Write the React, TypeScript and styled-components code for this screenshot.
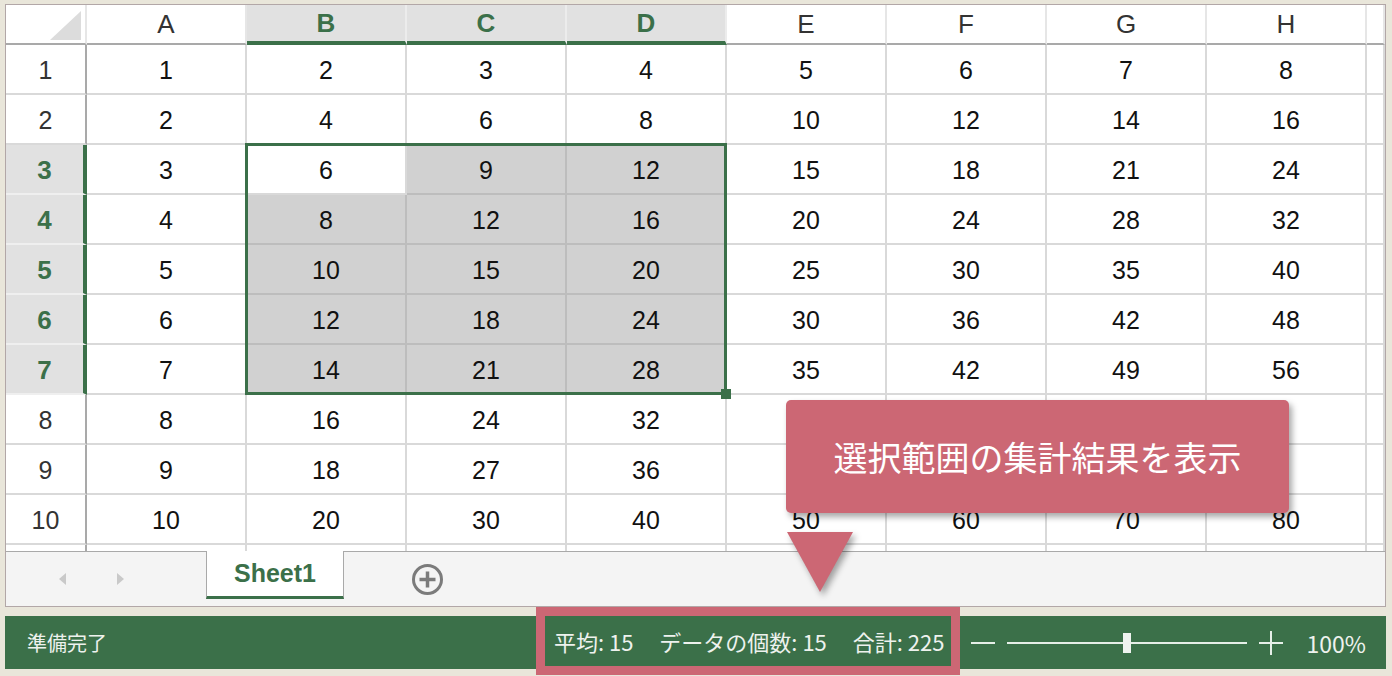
import styled, { createGlobalStyle } from "styled-components";

const GREEN = "#3b7049";
const PINK = "#cc6774";

const GlobalStyle = createGlobalStyle`
  html, body {
    margin: 0;
    padding: 0;
  }
  body {
    background: #e9e6da;
    font-family: "Liberation Sans", Arial, sans-serif;
  }
`;

const Page = styled.div`
  position: relative;
  width: 1392px;
  height: 676px;
  padding: 4px 6px 0 5px;
  box-sizing: border-box;
  overflow: hidden;
`;

const Workbook = styled.div`
  height: 603px;
  box-sizing: border-box;
  border: 1px solid #b2a7a7;
  background: #fff;
  display: flex;
  flex-direction: column;
  overflow: hidden;
`;

const Grid = styled.div`
  display: grid;
  grid-template-columns: 81px repeat(8, 160px) 1fr;
  grid-template-rows: 40px repeat(11, 50px);
  height: 546px;
  flex-shrink: 0;
  overflow: hidden;
`;

// every grid part names its own track so the selection outline can share them
type Place = { $row: number; $col: number };

const placed = (p: Place) => `
  grid-row: ${p.$row};
  grid-column: ${p.$col};
`;

const Corner = styled.div`
  grid-row: 1;
  grid-column: 1;
  display: flex;
  align-items: flex-end;
  justify-content: flex-end;
  padding: 0 4px 3px 0;
  border-right: 2px solid #e6e6e6;
  border-bottom: 2px solid #a9a9a9;

  &::after {
    content: "";
    width: 31px;
    height: 29px;
    background: #dcdcdc;
    clip-path: polygon(100% 0, 100% 100%, 0 100%);
  }
`;

const ColHeader = styled.div<Place & { $selected?: boolean }>`
  ${placed}
  display: flex;
  align-items: center;
  justify-content: center;
  background: ${(p) => (p.$selected ? "#e1e1e1" : "#fff")};
  color: ${(p) => (p.$selected ? GREEN : "#333")};
  font-size: 26px;
  font-weight: ${(p) => (p.$selected ? 700 : 400)};
  border-right: 2px solid ${(p) => (p.$selected ? "#ececec" : "#e6e6e6")};
  border-bottom: ${(p) => (p.$selected ? `4px solid ${GREEN}` : "2px solid #a9a9a9")};
`;

const RowHeader = styled.div<Place & { $selected?: boolean }>`
  ${placed}
  display: flex;
  align-items: center;
  justify-content: center;
  padding-top: 2px;
  background: ${(p) => (p.$selected ? "#e1e1e1" : "#fff")};
  color: ${(p) => (p.$selected ? GREEN : "#333")};
  font-size: ${(p) => (p.$selected ? "26px" : "25px")};
  font-weight: ${(p) => (p.$selected ? 700 : 400)};
  border-right: ${(p) => (p.$selected ? `4px solid ${GREEN}` : "2px solid #a9a9a9")};
  border-bottom: 2px solid ${(p) => (p.$selected ? "#efefef" : "#d9d9d9")};
`;

const Cell = styled.div<Place & { $filled?: boolean }>`
  ${placed}
  display: flex;
  align-items: center;
  justify-content: center;
  padding-top: 2px;
  font-size: 25px;
  color: #111;
  background: ${(p) => (p.$filled ? "#d1d1d1" : "#fff")};
  border-right: 2px solid ${(p) => (p.$filled ? "#bdbdbd" : "#d9d9d9")};
  border-bottom: 2px solid ${(p) => (p.$filled ? "#bdbdbd" : "#d9d9d9")};
`;

// outline of the selected range B3:D7, laid over the cells
const Selection = styled.div`
  grid-column: 3 / 6;
  grid-row: 4 / 9;
  position: relative;
  margin: -2px 0 0 -2px;
  border: 3px solid ${GREEN};
  pointer-events: none;
`;

const FillHandle = styled.span`
  position: absolute;
  right: -7px;
  bottom: -7px;
  width: 10px;
  height: 10px;
  background: ${GREEN};
`;

const TabBar = styled.div`
  flex: 1;
  display: flex;
  align-items: flex-start;
  background: #f4f4f4;
  border-top: 1px solid #a9a9a9;
`;

const NavArrows = styled.div`
  width: 200px;
  height: 100%;
  box-sizing: border-box;
  display: flex;
  align-items: center;
  gap: 51px;
  padding-left: 53px;
`;

const NavArrow = styled.span<{ $dir: "left" | "right" }>`
  width: 0;
  height: 0;
  border-top: 6px solid transparent;
  border-bottom: 6px solid transparent;
  ${(p) =>
    p.$dir === "left"
      ? "border-right: 7px solid #c9c9c9;"
      : "border-left: 7px solid #c9c9c9;"}
`;

const SheetTab = styled.div`
  width: 138px;
  height: 48px;
  margin-top: -1px;
  box-sizing: border-box;
  display: flex;
  align-items: center;
  justify-content: center;
  background: #fff;
  border-left: 1px solid #a9a9a9;
  border-right: 1px solid #a9a9a9;
  border-bottom: 3px solid ${GREEN};
  color: ${GREEN};
  font-size: 25px;
  font-weight: 700;
`;

const AddSheet = styled.button`
  align-self: center;
  margin-left: 68px;
  padding: 0;
  border: none;
  background: none;
  display: flex;
`;

const StatusBar = styled.div`
  margin-top: 9px;
  height: 53px;
  display: flex;
  align-items: center;
  padding: 0 20px 0 22px;
  background: ${GREEN};
  color: #eef2ee;
  font-family: "Noto Sans CJK JP", "Liberation Sans", sans-serif;
  font-size: 20px;
`;

const Ready = styled.span`
  flex: 1;
`;

const Stats = styled.div`
  align-self: flex-start;
  height: 50px;
  display: flex;
  align-items: center;
  gap: 26px;
  padding: 0 6px 0 9px;
  font-size: 22px;
  outline: 9px solid ${PINK};
`;

const ZoomControl = styled.div`
  display: flex;
  align-items: center;
  margin-left: 20px;
`;

const Minus = styled.span`
  width: 24px;
  height: 2px;
  background: #e6efe8;
`;

const Track = styled.div`
  width: 240px;
  margin: 0 12px;
  display: flex;
  align-items: center;
`;

const TrackLine = styled.span<{ $grow?: boolean }>`
  height: 2px;
  background: #e6efe8;
  ${(p) => (p.$grow ? "flex: 1;" : "width: 116px;")}
`;

const Thumb = styled.span`
  width: 8px;
  height: 20px;
  background: #eef3ef;
`;

const Percent = styled.span`
  margin-left: 24px;
  font-size: 23px;
`;

const Callout = styled.div`
  position: absolute;
  left: 786px;
  top: 400px;
  width: 503px;
  height: 113px;
  display: flex;
  align-items: center;
  justify-content: center;
  border-radius: 5px;
  background: ${PINK};
  box-shadow: 3px 4px 6px rgba(0, 0, 0, 0.35);
  color: #fff;
  font-family: "Noto Sans CJK JP", sans-serif;
  font-size: 34px;
`;

const Pointer = styled.div`
  position: absolute;
  left: 787px;
  top: 532px;
  width: 0;
  height: 0;
  border-left: 33px solid transparent;
  border-right: 33px solid transparent;
  border-top: 60px solid ${PINK};
  filter: drop-shadow(3px 4px 3px rgba(0, 0, 0, 0.35));
`;

const columns = ["A", "B", "C", "D", "E", "F", "G", "H"];
const rows = [1, 2, 3, 4, 5, 6, 7, 8, 9, 10, 11];

const inRange = (row: number, col: number) =>
  row >= 3 && row <= 7 && col >= 2 && col <= 4;

// cells left blank: the half-visible row 11 and E8:H9 under the note
const isBlank = (row: number, col: number) =>
  row === 11 || (row >= 8 && row <= 9 && col >= 5);

function App() {
  return (
    <Page>
      <GlobalStyle />
      <Workbook>
        <Grid>
          <Corner />
          {columns.map((name, i) => (
            <ColHeader key={name} $row={1} $col={i + 2} $selected={i >= 1 && i <= 3}>
              {name}
            </ColHeader>
          ))}
          <ColHeader $row={1} $col={10} />
          {rows.map((row) => [
            <RowHeader key={`h${row}`} $row={row + 1} $col={1} $selected={row >= 3 && row <= 7}>
              {row === 11 ? "" : row}
            </RowHeader>,
            ...columns.map((_, i) => {
              const col = i + 1;
              const filled = inRange(row, col) && !(row === 3 && col === 2);
              return (
                <Cell key={`${row}-${col}`} $row={row + 1} $col={col + 1} $filled={filled}>
                  {isBlank(row, col) ? "" : row * col}
                </Cell>
              );
            }),
            <Cell key={`${row}-i`} $row={row + 1} $col={10} />,
          ])}
          <Selection>
            <FillHandle />
          </Selection>
        </Grid>
        <TabBar>
          <NavArrows>
            <NavArrow $dir="left" />
            <NavArrow $dir="right" />
          </NavArrows>
          <SheetTab>Sheet1</SheetTab>
          <AddSheet>
            <svg width="31" height="31" viewBox="0 0 31 31">
              <circle cx="15.5" cy="15.5" r="14" fill="none" stroke="#7b7b7b" strokeWidth="3" />
              <path d="M15.5 7.5v16M7.5 15.5h16" stroke="#7b7b7b" strokeWidth="3.5" />
            </svg>
          </AddSheet>
        </TabBar>
      </Workbook>
      <StatusBar>
        <Ready>準備完了</Ready>
        <Stats>
          <span>平均: 15</span>
          <span>データの個数: 15</span>
          <span>合計: 225</span>
        </Stats>
        <ZoomControl>
          <Minus />
          <Track>
            <TrackLine />
            <Thumb />
            <TrackLine $grow />
          </Track>
          <svg width="24" height="24" viewBox="0 0 24 24">
            <path d="M12 0v24M0 12h24" stroke="#e6efe8" strokeWidth="2" />
          </svg>
          <Percent>100%</Percent>
        </ZoomControl>
      </StatusBar>
      <Callout>選択範囲の集計結果を表示</Callout>
      <Pointer />
    </Page>
  );
}

export default App;
